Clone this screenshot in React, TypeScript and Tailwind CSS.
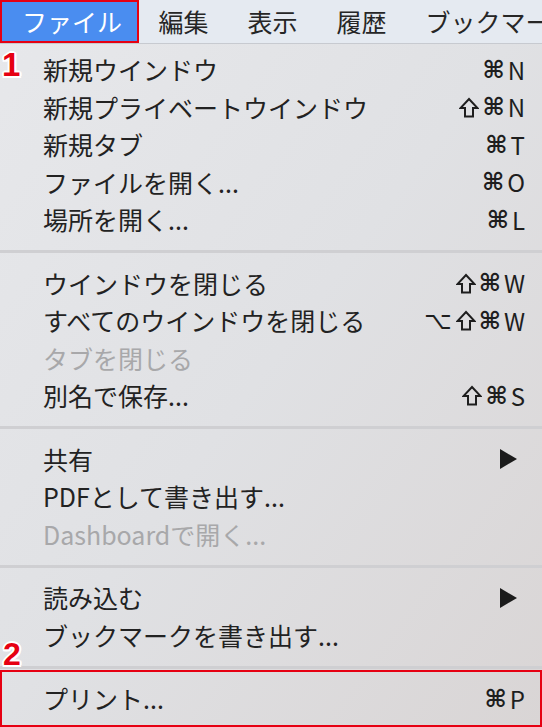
import React from "react";

type Item = {
  label: string;
  shortcut?: string;
  disabled?: boolean;
  submenu?: boolean;
};

const sections: Item[][] = [
  [
    { label: "新規ウインドウ", shortcut: "⌘N" },
    { label: "新規プライベートウインドウ", shortcut: "⇧⌘N" },
    { label: "新規タブ", shortcut: "⌘T" },
    { label: "ファイルを開く...", shortcut: "⌘O" },
    { label: "場所を開く...", shortcut: "⌘L" },
  ],
  [
    { label: "ウインドウを閉じる", shortcut: "⇧⌘W" },
    { label: "すべてのウインドウを閉じる", shortcut: "⌥⇧⌘W" },
    { label: "タブを閉じる", disabled: true },
    { label: "別名で保存...", shortcut: "⇧⌘S" },
  ],
  [
    { label: "共有", submenu: true },
    { label: "PDFとして書き出す..." },
    { label: "Dashboardで開く...", disabled: true },
  ],
  [
    { label: "読み込む", submenu: true },
    { label: "ブックマークを書き出す..." },
  ],
  [{ label: "プリント...", shortcut: "⌘P" }],
];

const menuBar = ["編集", "表示", "履歴", "ブックマーク"];

const font = "font-['Noto_Sans_CJK_JP','DejaVu_Sans',sans-serif]";

export default function App() {
  return (
    <div
      className={`relative w-[542px] h-[727px] overflow-hidden bg-linear-to-br from-[#e7e8eb] via-[#e0e1e4] to-[#d9d5d5] ${font}`}
    >
      {/* Menu bar */}
      <div className="flex h-[44px] bg-[#e5eaf1] border-b border-[#c7cad0] whitespace-nowrap overflow-hidden">
        <div className="flex items-center w-[139px] shrink-0 pl-[20px] bg-[#4a8df0] border-2 border-[#e60012] text-white text-[25px] leading-none">
          ファイル
        </div>
        {menuBar.map((m) => (
          <div
            key={m}
            className="flex items-center shrink-0 px-[19.5px] text-[25px] leading-none text-[#262626]"
          >
            {m}
          </div>
        ))}
      </div>

      {/* Menu body */}
      <div className="pt-[7px]">
        {sections.map((items, i) => (
          <React.Fragment key={i}>
            {i > 0 && <Separator />}
            {items.map((item) => (
              <MenuRow key={item.label} item={item} />
            ))}
          </React.Fragment>
        ))}
      </div>

      {/* Annotations */}
      <Badge className="left-[2px] top-[48px] text-[33px]">1</Badge>
      <Badge className="left-[3px] top-[638px] text-[32px]">2</Badge>
      <div className="absolute left-0 right-0 top-[670px] h-[57px] border-2 border-[#e60012]" />
    </div>
  );
}

function Separator() {
  return (
    <div className="flex items-center h-[26px]">
      <div className="w-full h-[3px] bg-[#cfcfd2]" />
    </div>
  );
}

function ShiftIcon() {
  return (
    <svg
      width="20"
      height="21"
      viewBox="0 0 20 21"
      className="mr-[3px]"
      aria-label="⇧"
    >
      <path
        d="M10 2 L18.5 11 H14 V19.5 H6 V11 H1.5 Z"
        fill="none"
        stroke="#1e1e1e"
        strokeWidth="2"
        strokeLinejoin="miter"
      />
    </svg>
  );
}

function Shortcut({ keys }: { keys: string }) {
  return (
    <span className="flex items-center text-[24px] leading-none text-[#1e1e1e]">
      {Array.from(keys).map((k, i) =>
        k === "⇧" ? (
          <ShiftIcon key={i} />
        ) : k === "⌥" ? (
          <span key={i} className="mr-[4px] font-['DejaVu_Sans',sans-serif]">
            ⌥
          </span>
        ) : k === "⌘" ? (
          <span
            key={i}
            className="mr-[3px] font-bold font-['DejaVu_Sans',sans-serif]"
          >
            ⌘
          </span>
        ) : (
          <span key={i}>{k}</span>
        )
      )}
    </span>
  );
}

function MenuRow({ item }: { item: Item }) {
  return (
    <div
      className={`flex items-center justify-between h-[37.5px] pl-[43px] pr-[17px] text-[25px] leading-none ${
        item.disabled ? "text-[#a8a8aa]" : "text-[#222222]"
      }`}
    >
      <span className="whitespace-nowrap">{item.label}</span>
      {item.shortcut && <Shortcut keys={item.shortcut} />}
      {item.submenu && (
        <svg width="17" height="20" viewBox="0 0 17 20" className="mr-[8px]">
          <polygon points="0,0 17,10 0,20" fill="#1b1b1b" />
        </svg>
      )}
    </div>
  );
}

function Badge({
  children,
  className,
}: {
  children: React.ReactNode;
  className: string;
}) {
  return (
    <div
      className={`absolute leading-none font-bold text-[#e60012] font-['Liberation_Sans',sans-serif] [text-shadow:2px_0_0_#fff,-2px_0_0_#fff,0_2px_0_#fff,0_-2px_0_#fff,1.5px_1.5px_0_#fff,-1.5px_-1.5px_0_#fff,1.5px_-1.5px_0_#fff,-1.5px_1.5px_0_#fff] ${className}`}
    >
      {children}
    </div>
  );
}
